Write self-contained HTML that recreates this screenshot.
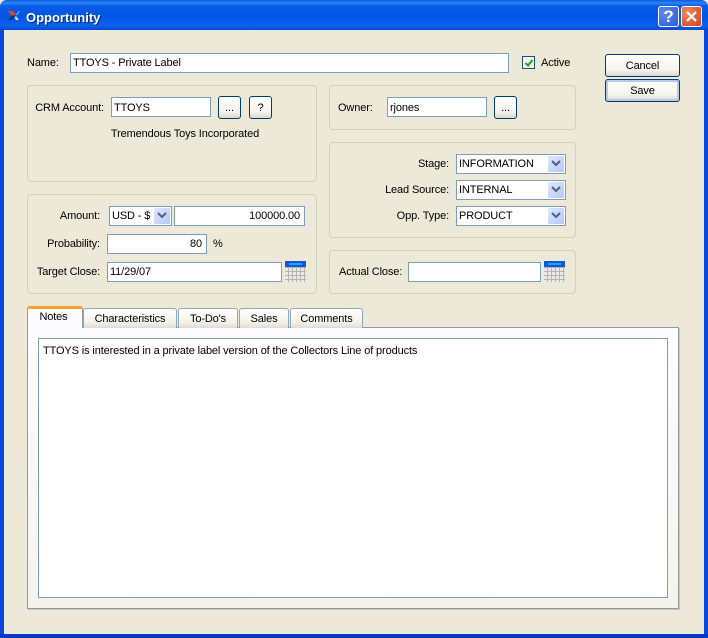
<!DOCTYPE html>
<html><head><meta charset="utf-8"><style>
html,body{margin:0;padding:0}
body{width:708px;height:638px;overflow:hidden;position:relative;background:#ece9d8;font:11px "Liberation Sans",sans-serif;color:#000;letter-spacing:-.125px}
div,span.a{position:absolute;box-sizing:border-box}
.t{white-space:nowrap;line-height:14px;height:14px}
.r{text-align:right}
.i{background:#fff;border:1px solid #7f9db9;height:20px;line-height:18px;padding:0 2px;white-space:nowrap}
.g{border:1px solid #d0d0bf;border-radius:4px;background:#ece9d8}
.b{border:1px solid #003c74;border-radius:3px;background:linear-gradient(#fff,#f5f4ee 70%,#dcd8ca);text-align:center;line-height:23px}
.s{background:#fff;border:1px solid #7f9db9;height:20px;line-height:18px;padding:0 2px;white-space:nowrap}
.ar{right:1px;top:1px;width:16px;height:16px;background:linear-gradient(135deg,#dfe8fd,#b4c8f6);border-radius:1px}
.ar svg{position:absolute;left:3px;top:4px}
.tab{border:1px solid #91a7b4;border-bottom:0;border-radius:3px 3px 0 0;background:linear-gradient(#fff,#f3f2ea 70%,#dedcd0);text-align:center;line-height:20px}
.cal{width:21px;height:21px;background:#e9e9e6}
.cal svg{position:absolute;left:0;top:0}
</style></head><body>
<div style="left:0;top:0;width:708px;height:638px;border-radius:7px 7px 0 0;background:#0a4ce0"></div>
<div style="left:0;top:0;width:708px;height:30px;border-radius:7px 7px 0 0;background:linear-gradient(#0a5ae8 0,#2a85f5 3px,#0a5ce6 6px,#0055e5 16px,#0a62ee 26px,#0446cf 30px)"></div>
<div style="left:0;top:30px;width:4px;height:604px;background:#0a45dc"></div>
<div style="left:704px;top:30px;width:4px;height:604px;background:#0a45dc"></div>
<div style="left:0;top:634px;width:708px;height:4px;background:#0038c8"></div>
<div style="left:4px;top:30px;width:700px;height:604px;background:#ece9d8"></div>
<svg style="position:absolute;left:8px;top:11px" width="12" height="9" viewBox="0 0 12 9"><path d="M0 0h5l3 3.5-2 1.5H4z" fill="#e2481c"/><path d="M4 4.5h3L4 9H0z" fill="#122a78"/><path d="M8 3.5L11 0h1L9 4.5z" fill="#8fb4f0"/><path d="M8 5l3 4H8L6.5 6.5z" fill="#c9daf6"/></svg>
<div class="t" style="left:26px;top:9px;height:17px;line-height:17px;color:#fff;font-weight:bold;font-size:13px;text-shadow:1px 1px #0a2a90;letter-spacing:0">Opportunity</div>
<div style="left:658px;top:6px;width:21px;height:21px;border:1px solid #fff;border-radius:3px;background:radial-gradient(circle at 30% 30%,#5f8cf0,#2a58d8);color:#fff;font:bold 17px/19px 'Liberation Sans',sans-serif;text-align:center">?</div>
<div style="left:681px;top:6px;width:21px;height:21px;border:1px solid #fff;border-radius:3px;background:radial-gradient(circle at 30% 30%,#ee8a66,#d1401c)"><svg style="position:absolute;left:4px;top:4px" width="11" height="11"><path d="M1 1l9 9M10 1l-9 9" stroke="#fff" stroke-width="2.2"/></svg></div>

<div class="t" style="left:27px;top:56px">Name:</div>
<div class="i" style="left:70px;top:53px;width:439px">TTOYS - Private Label</div>
<div style="left:522px;top:56px;width:13px;height:13px;border:1px solid #1c5180;background:#f4f4ee"><svg style="position:absolute;left:1px;top:1px" width="10" height="10"><path d="M1.5 5l2.5 2.5 4.5-5.5" stroke="#21a121" stroke-width="2" fill="none"/></svg></div>
<div class="t" style="left:541px;top:56px">Active</div>
<div class="b" style="left:605px;top:54px;width:75px;height:23px">Cancel</div>
<div class="b" style="left:605px;top:79px;width:75px;height:23px;box-shadow:inset 0 0 0 2px #b6c9ee">Save</div>

<div class="g" style="left:27px;top:85px;width:290px;height:97px"></div>
<div class="t r" style="left:30px;top:101px;width:74px">CRM Account:</div>
<div class="i" style="left:111px;top:97px;width:100px;line-height:20px">TTOYS</div>
<div class="b" style="left:218px;top:96px;width:23px;height:23px">...</div>
<div class="b" style="left:249px;top:96px;width:23px;height:23px">?</div>
<div class="t" style="left:85px;top:127px;width:200px;text-align:center">Tremendous Toys Incorporated</div>

<div class="g" style="left:329px;top:85px;width:247px;height:45px"></div>
<div class="t" style="left:338px;top:101px">Owner:</div>
<div class="i" style="left:387px;top:97px;width:100px;line-height:20px">rjones</div>
<div class="b" style="left:494px;top:96px;width:23px;height:23px">...</div>

<div class="g" style="left:329px;top:142px;width:247px;height:96px"></div>
<div class="t r" style="left:340px;top:157px;width:109px">Stage:</div>
<div class="s" style="left:456px;top:154px;width:110px">INFORMATION<div class="ar"><svg width="10" height="8"><path d="M1 1l4 4 4-4" stroke="#4d6185" stroke-width="2" fill="none"/></svg></div></div>
<div class="t r" style="left:340px;top:183px;width:109px">Lead Source:</div>
<div class="s" style="left:456px;top:180px;width:110px">INTERNAL<div class="ar"><svg width="10" height="8"><path d="M1 1l4 4 4-4" stroke="#4d6185" stroke-width="2" fill="none"/></svg></div></div>
<div class="t r" style="left:340px;top:209px;width:109px">Opp. Type:</div>
<div class="s" style="left:456px;top:206px;width:110px">PRODUCT<div class="ar"><svg width="10" height="8"><path d="M1 1l4 4 4-4" stroke="#4d6185" stroke-width="2" fill="none"/></svg></div></div>

<div class="g" style="left:329px;top:250px;width:247px;height:44px"></div>
<div class="t" style="left:339px;top:265px">Actual Close:</div>
<div class="i" style="left:408px;top:262px;width:133px"></div>
<div class="cal" style="left:544px;top:261px"><svg width="21" height="21"><rect width="21" height="6" fill="#1158d8"/><rect x="4" y="2" width="13" height="2" fill="#2aa0e8"/><path d="M0 6.5h21M0 10.5h21M0 14.5h21M0 18.5h21M3.5 6v15M7.5 6v15M11.5 6v15M15.5 6v15M19.5 6v15" stroke="#b4b4b0" fill="none"/></svg></div>

<div class="g" style="left:27px;top:194px;width:290px;height:100px"></div>
<div class="t r" style="left:30px;top:209px;width:70px">Amount:</div>
<div class="s" style="left:109px;top:206px;width:63px">USD - $<div class="ar"><svg width="10" height="8"><path d="M1 1l4 4 4-4" stroke="#4d6185" stroke-width="2" fill="none"/></svg></div></div>
<div class="i r" style="left:174px;top:206px;width:131px;padding-right:4px">100000.00</div>
<div class="t r" style="left:30px;top:237px;width:70px">Probability:</div>
<div class="i r" style="left:107px;top:234px;width:100px;padding-right:4px">80</div>
<div class="t" style="left:213px;top:237px">%</div>
<div class="t r" style="left:30px;top:265px;width:70px">Target Close:</div>
<div class="i" style="left:107px;top:262px;width:175px">11/29/07</div>
<div class="cal" style="left:285px;top:261px"><svg width="21" height="21"><rect width="21" height="6" fill="#1158d8"/><rect x="4" y="2" width="13" height="2" fill="#2aa0e8"/><path d="M0 6.5h21M0 10.5h21M0 14.5h21M0 18.5h21M3.5 6v15M7.5 6v15M11.5 6v15M15.5 6v15M19.5 6v15" stroke="#b4b4b0" fill="none"/></svg></div>

<div style="left:27px;top:327px;width:652px;height:282px;border:1px solid #919b9c;background:linear-gradient(#fcfcfe,#f4f3ee);box-shadow:1px 1px 0 #c8c6b8"></div>
<div class="tab" style="left:83px;top:308px;width:94px;height:20px">Characteristics</div>
<div class="tab" style="left:178px;top:308px;width:60px;height:20px">To-Do's</div>
<div class="tab" style="left:239px;top:308px;width:50px;height:20px">Sales</div>
<div class="tab" style="left:290px;top:308px;width:73px;height:20px">Comments</div>
<div style="left:27px;top:306px;width:56px;height:22px;background:#fcfcfe;border:1px solid #919b9c;border-bottom:0;border-top:0;border-radius:3px 3px 0 0;text-align:center;line-height:22px;padding-right:3px">Notes<div style="left:-1px;top:0;width:56px;height:3px;background:#f5a62d;border-radius:3px 3px 0 0"></div></div>
<div style="left:38px;top:338px;width:630px;height:260px;background:#fff;border:1px solid #7f9db9;padding:5px 4px;line-height:14px;white-space:nowrap">TTOYS is interested in a private label version of the Collectors Line of products</div>
</body></html>
